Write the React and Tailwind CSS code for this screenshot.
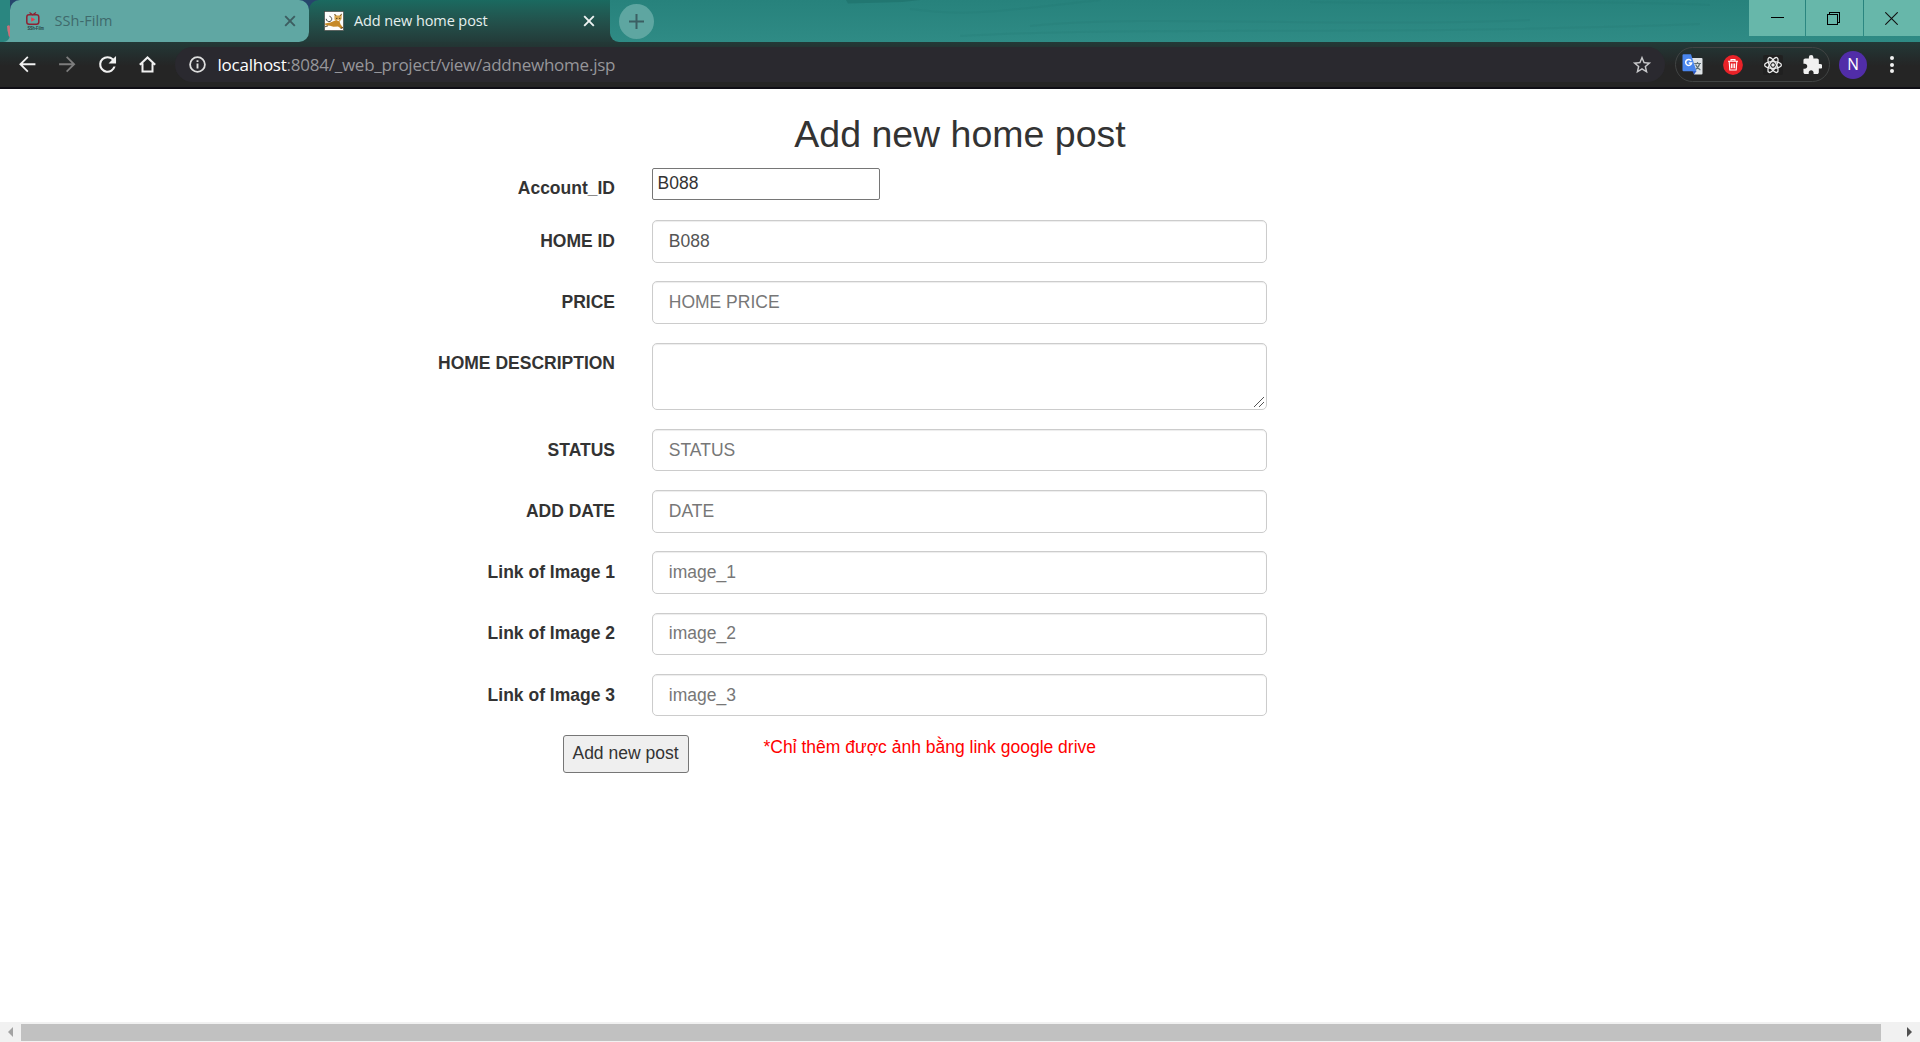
import React from "react";

const CHROME_FONT = "font-['Open_Sans','Noto_Sans',sans-serif]";

function CloseIcon({ className }) {
  return (
    <svg className={className} width="12" height="12" viewBox="0 0 12 12" fill="none" stroke="currentColor" strokeWidth="1.9">
      <path d="M1.2 1.2 10.8 10.8M10.8 1.2 1.2 10.8" />
    </svg>
  );
}

function FilmFavicon() {
  return (
    <svg width="20" height="20" viewBox="0 0 20 20" fill="none" className="overflow-visible">
      <path d="M4.500 1.500 7.700 3.800 11 1.500" stroke="#8f2233" strokeWidth="1.100" />
      <rect x="1.800" y="3.800" width="12" height="9.400" rx="2.200" stroke="#8f2233" strokeWidth="1.500" />
      <path d="M6.200 6.200v4.600l4-2.300z" fill="#f0384c" />
      <text x="2.400" y="19" fontSize="4.500" fontWeight="700" fill="#263e40" textLength="16.500" lengthAdjust="spacingAndGlyphs" fontFamily="Liberation Sans">SSh-Film</text>
    </svg>
  );
}

function TomcatFavicon() {
  return (
    <svg width="20" height="20" viewBox="0 0 20 20">
      <rect x=".5" y=".5" width="19" height="19" fill="#fdfdfb" stroke="#3b3b38" strokeWidth=".6" />
      <path d="m10.500 3 1.800 1.600h3.200L17.800 3l-.2 5-1.800 2.600-3.600.2-1.800-2.600z" fill="#dba94e" />
      <path d="M10.600 9.800 6.400 11.600 1 12.400l.4 1.800 4.600.6 3.400 1 4.600-.2 3.400 2.200 1.800-1-2.600-3.400-1.400-3.600z" fill="#c68a28" />
      <path d="M5.400 5.200C8 6 8.600 9 6.200 10.400 4.400 11.200 2 9.600 2.200 7.800" fill="none" stroke="#333" strokeWidth=".9" />
      <path d="m10.500 3 1.600 1.800M17.800 3l-2 1.800M12 7.400h1.400M15 7.400h1.400M1 15.800l3-1M16.600 17.400l2.400-.8" stroke="#3a2a14" strokeWidth=".8" fill="none" />
      <path d="M12.800 8.800h2.800l-1.400 1.400z" fill="#fff" />
    </svg>
  );
}

function Toolbutton({ children }) {
  return <button className="flex h-10 w-10 shrink-0 items-center justify-center">{children}</button>;
}

function TabStrip() {
  return (
    <div className={`flex h-[42px] bg-[#2a8680] ${CHROME_FONT}`}>
      <div className="flex w-[10px] items-end justify-end overflow-hidden">
        <svg width="10" height="42" viewBox="0 0 10 42">
          <path d="M10 34v8H3c4 0 7-3 7-8z" fill="#60a7a3" />
          <path d="M7 26c3-2 3 0 3 3v8c-2 0-1.500-4-2.500-6z" fill="#c8717a" />
        </svg>
      </div>
      <div className="flex w-[299px] bg-[linear-gradient(#26456c_0_40%,#213e3b_60%)]">
        <div className="flex h-full w-full items-center rounded-t-[10px] rounded-br-[10px] bg-[#60a7a3] pl-[15px] pr-[13px]">
          <FilmFavicon />
          <span className="ml-[9.500px] flex-1 whitespace-nowrap text-[14.5px] tracking-[0.05px] text-[#3f6a6c]">SSh-Film</span>
          <CloseIcon className="text-[#3c5d60]" />
        </div>
      </div>
      <div className="flex w-[301px] bg-[#26456c]">
        <div className="flex h-full w-full items-center rounded-tl-[10px] bg-linear-to-b from-[#1a6a60] to-[#233b39] pl-[15px] pr-[15px]">
          <TomcatFavicon />
          <span className="ml-[10px] flex-1 whitespace-nowrap text-[14.5px] tracking-[-0.1px] text-[#e6efee]">Add new home post</span>
          <CloseIcon className="text-[#eef3f2]" />
        </div>
      </div>
      <div className="flex flex-1 bg-[#233c39]">
        <div className="relative flex h-full flex-1 items-start justify-between rounded-bl-[9px] bg-linear-to-b from-[#27827c] to-[#2f8b85]">
          <svg className="absolute inset-0" width="1140" height="42" viewBox="0 0 1140 42" fill="none">
            <path d="M236 0h74l-18 2-54 1.500z" fill="#1f726c" opacity=".7" />
            <path d="M300 9c60 8 90 2 190-9M700 2c130 3 260-3 400 3M420 26c120-12 300 2 500-6M350 36c180-10 420 0 740-12" stroke="#217670" strokeWidth="2" opacity=".18" />
          </svg>
          <button className="relative ml-[8.500px] mt-[3.500px] flex h-[35px] w-[35px] items-center justify-center rounded-full bg-[#5ea6a1]">
            <svg width="15" height="15" viewBox="0 0 15 15" stroke="#3b5f63" strokeWidth="2">
              <path d="M7.500 0v15M0 7.500h15" />
            </svg>
          </button>
          <div className="relative flex h-9 gap-px">
            <button className="flex w-14 items-center justify-center bg-[#67b7aa]">
              <svg width="13" height="13" viewBox="0 0 13 13" className="-translate-y-px" shapeRendering="crispEdges"><path d="M0 6.500h13" stroke="#000" /></svg>
            </button>
            <button className="flex w-[57px] items-center justify-center bg-[#67b7aa] pr-[2px]">
              <svg width="13" height="13" viewBox="0 0 13 13" fill="none" stroke="#000" shapeRendering="crispEdges"><path d="M.5 2.500h10v10H.5zM2.500 2.500v-2h10v10h-2" /></svg>
            </button>
            <button className="flex w-14 items-center justify-center bg-[#67b7aa] pr-[2px]">
              <svg width="13" height="13" viewBox="0 0 13 13" stroke="#111" strokeWidth="1.100"><path d="M.3.3l12.400 12.400M12.700.3.3 12.700" /></svg>
            </button>
          </div>
        </div>
      </div>
    </div>
  );
}

function Toolbar() {
  return (
    <div className={`flex h-[47px] items-center border-b-2 border-[#0f0e15] bg-[linear-gradient(#233937,#242b2b_16px,#252525_24px)] pl-[7.500px] ${CHROME_FONT}`}>
      <Toolbutton>
        <svg width="24.500" height="24.500" viewBox="0 0 24 24" fill="#f1f1f1"><path d="M20 11.100H7.600l5.600-5.700L12 4.100 4 12l8 7.900 1.200-1.300-5.600-5.700H20z" /></svg>
      </Toolbutton>
      <Toolbutton>
        <svg width="24.500" height="24.500" viewBox="0 0 24 24" fill="#7d7d7d"><path d="M4 11.100h12.400l-5.600-5.700L12 4.100l8 7.900-8 7.900-1.200-1.300 5.600-5.700H4z" /></svg>
      </Toolbutton>
      <Toolbutton>
        <svg width="25" height="25" viewBox="0 0 24 24" fill="#f1f1f1"><path d="M17.650 6.350A7.960 7.960 0 0 0 12 4a8 8 0 1 0 7.730 10h-2.080A6 6 0 1 1 12 6c1.660 0 3.140.69 4.220 1.780L13 11h7.200V3.800z" /></svg>
      </Toolbutton>
      <Toolbutton>
        <svg width="17" height="17" viewBox="0 0 17 17" fill="none" stroke="#f1f1f1" strokeWidth="2"><path d="M.8 8.800 8.500 1.500l7.700 7.300M3.500 7.200v8.300h10V7.200" /></svg>
      </Toolbutton>
      <div className="ml-[7.500px] flex h-[35px] w-[1490px] items-center rounded-full bg-[#2a292f] pl-[14px] pr-[12px]">
        <svg width="17" height="17" viewBox="0 0 17 17" fill="none" stroke="#dedede"><circle cx="8.500" cy="8.500" r="7.400" strokeWidth="1.800" /><path d="M8.500 7.600v5M8.500 4.200v1.900" strokeWidth="1.900" /></svg>
        <span className="ml-[11.500px] flex-1 whitespace-nowrap text-[17px] tracking-[-0.24px] text-[#96969a]">
          <span className="text-white">localhost</span>:8084/_web_project/view/addnewhome.jsp
        </span>
        <svg width="22" height="22" viewBox="0 0 24 24" fill="#c8c8cb"><path d="m22 9.240-7.190-.62L12 2 9.190 8.630 2 9.240l5.460 4.730L5.820 21 12 17.270 18.180 21l-1.630-7.030zM12 15.400l-3.760 2.270 1-4.280-3.320-2.880 4.380-.38L12 6.100l1.710 4.040 4.380.38-3.320 2.880 1 4.280z" /></svg>
      </div>
      <div className="ml-[10px] flex h-[35px] w-[155px] items-center justify-between rounded-full border border-[#414444] pl-[6px] pr-[7px]">
        <svg width="21" height="21" viewBox="0 0 21 21">
          <path d="M9.500 4H19.500a1 1 0 0 1 1 1v14.500a1 1 0 0 1-1 1H12z" fill="#dfe3e6" />
          <path d="M12.200 9.500h6.800M15.500 8v1.500M17.600 9.700c-.6 2.800-2.500 5-4.700 6.300M13.600 10.500c.8 2.300 2.400 4 4.800 5.500" stroke="#5f6f75" strokeWidth="1.200" fill="none" />
          <path d="m10.500 17 4 0-2.400 3.500z" fill="#2a56c6" />
          <path d="M1.500.3H9l5.500 16.900h-13a1 1 0 0 1-1-1V1.300a1 1 0 0 1 1-1z" fill="#4a86ee" />
          <path d="M9.200 6.800A3 3 0 1 0 9.600 9H6.800" fill="none" stroke="#fff" strokeWidth="1.500" />
        </svg>
        <svg width="20" height="20" viewBox="0 0 20 20" fill="none">
          <circle cx="10" cy="10" r="9.900" fill="#e92228" />
          <path d="M5 6.200h10M8 6V4.600h4V6M6.200 6.800l.6 8.200h6.400l.6-8.200M8.400 8.500v4.800M10 8.500v4.800M11.600 8.500v4.800" stroke="#fff" strokeWidth="1.100" />
        </svg>
        <svg width="20" height="20" viewBox="0 0 20 20" fill="none" stroke="#ececec" strokeWidth="1.300">
          <rect width="20" height="20" rx="2" fill="#202020" stroke="none" />
          <ellipse cx="10" cy="10" rx="8.400" ry="3.300" />
          <ellipse cx="10" cy="10" rx="8.400" ry="3.300" transform="rotate(60 10 10)" />
          <ellipse cx="10" cy="10" rx="8.400" ry="3.300" transform="rotate(120 10 10)" />
          <circle cx="10" cy="10" r="1.700" fill="#ececec" stroke="none" />
        </svg>
        <svg width="19" height="19" viewBox="1.500 1 21 21" fill="#f1f1f1"><path d="M20.500 11H19V7c0-1.100-.9-2-2-2h-4V3.500a2.500 2.500 0 0 0-5 0V5H4c-1.100 0-1.990.9-1.990 2v3.800H3.500c1.490 0 2.700 1.210 2.700 2.700s-1.210 2.700-2.700 2.700H2V20c0 1.100.9 2 2 2h3.800v-1.500c0-1.490 1.210-2.700 2.700-2.700s2.700 1.210 2.700 2.700V22H17c1.100 0 2-.9 2-2v-4h1.500a2.500 2.500 0 0 0 0-5z" /></svg>
      </div>
      <div className="ml-[9px] flex h-7 w-7 items-center justify-center rounded-full bg-[#512da8] text-[15.5px] text-white">N</div>
      <div className="ml-[23px] flex flex-col gap-[2.500px]">
        <i className="h-[4px] w-[4px] rounded-full bg-[#f1f1f1]" />
        <i className="h-[4px] w-[4px] rounded-full bg-[#f1f1f1]" />
        <i className="h-[4px] w-[4px] rounded-full bg-[#f1f1f1]" />
      </div>
    </div>
  );
}

const FIELD =
  "block w-[615px] rounded-[5px] border border-[#ccc] bg-white px-[15.75px] text-[17.5px] leading-[25px] text-[#555] placeholder-[#777] shadow-[inset_0_1px_1px_rgba(0,0,0,0.075)] outline-none";

function Row({ label, children }) {
  return (
    <div className="mb-[18.75px] flex items-start">
      <label className="mr-[37px] w-[615px] pt-[8.75px] text-right text-[17.5px] font-bold leading-[25px]">{label}</label>
      {children}
    </div>
  );
}

const FIELDS = [
  { label: "STATUS", placeholder: "STATUS" },
  { label: "ADD DATE", placeholder: "DATE" },
  { label: "Link of Image 1", placeholder: "image_1" },
  { label: "Link of Image 2", placeholder: "image_2" },
  { label: "Link of Image 3", placeholder: "image_3" },
];

function PostForm() {
  return (
    <main className="flex-1 overflow-hidden bg-white font-['Liberation_Sans',Arial,sans-serif] text-[#333]">
      <h2 className="mb-[12.5px] mt-[24.75px] text-center text-[37.5px] leading-[41.25px]">Add new home post</h2>
      <Row label="Account_ID">
        <input className="h-[32px] w-[228px] rounded-[2px] border border-[#767676] pb-[0.5px] pl-[4.5px] text-[17.5px] leading-[25px] outline-none" defaultValue="B088" />
      </Row>
      <Row label="HOME ID">
        <input className={`${FIELD} h-[42.5px]`} defaultValue="B088" />
      </Row>
      <Row label="PRICE">
        <input className={`${FIELD} h-[42.5px]`} placeholder="HOME PRICE" />
      </Row>
      <Row label="HOME DESCRIPTION">
        <div className="relative">
          <textarea className={`${FIELD} h-[67.5px] resize-none`} />
          <svg className="absolute bottom-[3px] right-[3px]" width="10" height="10" viewBox="0 0 10 10" stroke="#555" strokeWidth="1">
            <path d="M0 10 10 0M5 10l5-5" />
          </svg>
        </div>
      </Row>
      {FIELDS.map((f) => (
        <Row key={f.label} label={f.label}>
          <input className={`${FIELD} h-[42.5px]`} placeholder={f.placeholder} />
        </Row>
      ))}
      <div className="flex items-start pl-[563px] text-[17.5px] leading-[25px]">
        <button className="h-[38px] w-[126px] whitespace-nowrap rounded-[3px] border border-[#767676] bg-[#efefef] pb-[2px] pr-[1px]">Add new post</button>
        <p className="ml-[74.5px] whitespace-nowrap text-[#ff0000]">*Chỉ thêm được ảnh bằng link google drive</p>
      </div>
    </main>
  );
}

function Scrollbar() {
  return (
    <div className="flex h-5 items-center bg-[#f1f1f1]">
      <div className="flex w-[21px] justify-center">
        <svg width="5" height="10" viewBox="0 0 5 10" fill="#a3a3a3"><path d="M5 0v10L0 5z" /></svg>
      </div>
      <div className="h-[17px] w-[1860px] bg-[#c1c1c1]" />
      <div className="flex flex-1 justify-end pr-[8px]">
        <svg width="5" height="10" viewBox="0 0 5 10" fill="#505050"><path d="M0 0v10l5-5z" /></svg>
      </div>
    </div>
  );
}

export default function App() {
  return (
    <div className="flex h-[1042px] w-[1920px] flex-col overflow-hidden bg-white">
      <TabStrip />
      <Toolbar />
      <PostForm />
      <Scrollbar />
    </div>
  );
}
